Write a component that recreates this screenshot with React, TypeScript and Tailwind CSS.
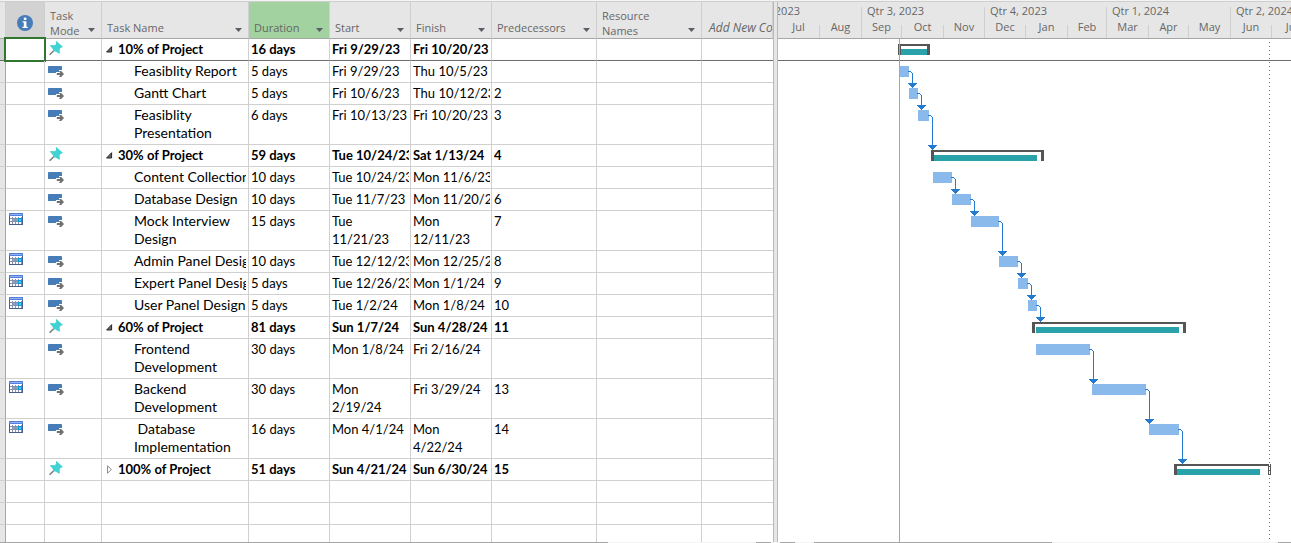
import React from 'react';

type Mode = 'manual' | 'auto';

interface Task {
  name: string;
  mode: Mode;
  duration: string;
  start: string;
  finish: string;
  pred?: string;
  calendar?: boolean;
  summary?: 'open' | 'closed';
  tall?: boolean;
  bar: [number, number];
  progress?: [number, number];
  link?: boolean;
}

const tasks: Task[] = [
  { name: '10% of Project', mode: 'manual', duration: '16 days', start: 'Fri 9/29/23', finish: 'Fri 10/20/23', summary: 'open', bar: [120, 152], progress: [123, 149] },
  { name: 'Feasiblity Report', mode: 'auto', duration: '5 days', start: 'Fri 9/29/23', finish: 'Thu 10/5/23', bar: [122, 131], link: true },
  { name: 'Gantt Chart', mode: 'auto', duration: '5 days', start: 'Fri 10/6/23', finish: 'Thu 10/12/23', pred: '2', bar: [131, 140], link: true },
  { name: 'Feasiblity\nPresentation', mode: 'auto', duration: '6 days', start: 'Fri 10/13/23', finish: 'Fri 10/20/23', pred: '3', tall: true, bar: [140, 151], link: true },
  { name: '30% of Project', mode: 'manual', duration: '59 days', start: 'Tue 10/24/23', finish: 'Sat 1/13/24', pred: '4', summary: 'open', bar: [153, 266], progress: [156, 259] },
  { name: 'Content Collection', mode: 'auto', duration: '10 days', start: 'Tue 10/24/23', finish: 'Mon 11/6/23', bar: [155, 174], link: true },
  { name: 'Database Design', mode: 'auto', duration: '10 days', start: 'Tue 11/7/23', finish: 'Mon 11/20/23', pred: '6', bar: [174, 193], link: true },
  { name: 'Mock Interview\nDesign', mode: 'auto', duration: '15 days', start: 'Tue\n11/21/23', finish: 'Mon\n12/11/23', pred: '7', calendar: true, tall: true, bar: [193, 221], link: true },
  { name: 'Admin Panel Design', mode: 'auto', duration: '10 days', start: 'Tue 12/12/23', finish: 'Mon 12/25/23', pred: '8', calendar: true, bar: [221, 240], link: true },
  { name: 'Expert Panel Design', mode: 'auto', duration: '5 days', start: 'Tue 12/26/23', finish: 'Mon 1/1/24', pred: '9', calendar: true, bar: [240, 250], link: true },
  { name: 'User Panel Design', mode: 'auto', duration: '5 days', start: 'Tue 1/2/24', finish: 'Mon 1/8/24', pred: '10', calendar: true, bar: [250, 259], link: true },
  { name: '60% of Project', mode: 'manual', duration: '81 days', start: 'Sun 1/7/24', finish: 'Sun 4/28/24', pred: '11', summary: 'open', bar: [254, 408], progress: [258, 401] },
  { name: 'Frontend\nDevelopment', mode: 'auto', duration: '30 days', start: 'Mon 1/8/24', finish: 'Fri 2/16/24', tall: true, bar: [258, 312], link: true },
  { name: 'Backend\nDevelopment', mode: 'auto', duration: '30 days', start: 'Mon\n2/19/24', finish: 'Fri 3/29/24', pred: '13', calendar: true, tall: true, bar: [314, 368], link: true },
  { name: '\u00a0Database\nImplementation', mode: 'auto', duration: '16 days', start: 'Mon 4/1/24', finish: 'Mon\n4/22/24', pred: '14', calendar: true, tall: true, bar: [371, 401], link: true },
  { name: '100% of Project', mode: 'manual', duration: '51 days', start: 'Sun 4/21/24', finish: 'Sun 6/30/24', pred: '15', summary: 'closed', bar: [396, 493], progress: [399, 482] },
];

const emptyRows = Array.from({ length: 40 }, (_, i) => i);

const rowTops: number[] = [];
tasks.reduce((y, t) => {
  rowTops.push(y);
  return y + (t.tall ? 40 : 22);
}, 0);

const quarters = [
  { label: 'Qtr 2, 2023', box: 'w-[83px]', text: '-ml-[35px]', months: [['Jul', 'w-[42px]'], ['Aug', 'w-[41px]']] },
  { label: 'Qtr 3, 2023', box: 'w-[123px] border-l', text: 'pl-[5px]', months: [['Sep', 'w-[40px]'], ['Oct', 'w-[42px]'], ['Nov', 'w-[40px]']] },
  { label: 'Qtr 4, 2023', box: 'w-[122px] border-l', text: 'pl-[5px]', months: [['Dec', 'w-[41px]'], ['Jan', 'w-[42px]'], ['Feb', 'w-[38px]']] },
  { label: 'Qtr 1, 2024', box: 'w-[124px] border-l', text: 'pl-[5px]', months: [['Mar', 'w-[42px]'], ['Apr', 'w-[40px]'], ['May', 'w-[41px]']] },
  { label: 'Qtr 2, 2024', box: 'w-[123px] border-l', text: 'pl-[5px]', months: [['Jun', 'w-[41px]'], ['Jul', 'w-[41px]'], ['Aug', 'w-[40px]']] },
];

function InfoIcon() {
  return (
    <svg width="16" height="16" viewBox="0 0 16 16" role="img" aria-label="Indicators">
      <circle cx="8" cy="8" r="8" fill="#467db8" />
      <rect x="6.8" y="2.6" width="2.6" height="2.4" fill="#fff" />
      <path d="M5.6 6.2h3.8v5.6h1.3v1.3H5.4v-1.3h1.4V7.4H5.6z" fill="#fff" />
    </svg>
  );
}

function PinIcon() {
  return (
    <svg className="ml-1 mt-[2px] block" width="14" height="15" viewBox="0 0 14 15" role="img" aria-label="Manually scheduled">
      <path d="M5 9.5L0.6 13.8" stroke="#7a7a7a" strokeWidth="1.5" />
      <path d="M7.4 0L13.8 5.8L13.2 6.6L11.6 6.8L10.6 8.6L10.9 12L10.2 12.8L6.6 10.4L4.2 10.2L3.8 8L1 4.8L1.6 3.9L5.6 4.2L7.2 3L6.8 0.8z" fill="#41d3d3" />
    </svg>
  );
}

function AutoIcon() {
  return (
    <svg className="ml-[3px] mt-[5px] block" width="16" height="12" viewBox="0 0 16 12" role="img" aria-label="Auto scheduled">
      <rect width="14" height="7" rx="0.4" fill="#467db8" />
      <path d="M8 6h3V4h3.2L16 6v5H8z" fill="#fff" />
      <path d="M9 7h3M12.2 4.6L15 7.9L12.2 11.2" fill="none" />
      <path d="M8.8 6.9h3.4L11 4.9h2.2L16 8L13.2 11.1H11l1.2-2H8.8z" fill="#707070" />
    </svg>
  );
}

function CalendarIcon() {
  return (
    <svg className="ml-[3px] mt-[2px] block" width="14" height="12" viewBox="0 0 14 12" shapeRendering="crispEdges" role="img" aria-label="Date constraint">
      <rect width="14" height="12" fill="#4a608c" />
      <rect width="14" height="3" fill="#5380dc" />
      <rect x="1" y="1" width="12" height="1" fill="#8fb0f5" />
      <rect x="1" y="3" width="12" height="8" fill="#fff" />
      <path d="M3 4h1v7H3zM6 4h1v7H6zM9 4h1v7H9zM12 4h1v7h-1zM1 5h12v1H1zM1 8h12v1H1z" fill="#8492b2" />
      <path d="M4 6h2v2H4zM7 6h2v2H7z" fill="#8fa0c4" />
      <rect x="9" y="5" width="4" height="4" fill="#0a9ad8" />
      <rect x="10" y="6" width="2" height="2" fill="#35d3fb" />
    </svg>
  );
}

function Toggle({ open }: { open: boolean }) {
  return (
    <button type="button" aria-label={open ? 'Collapse' : 'Expand'} className="flex h-[20px] w-4 shrink-0 items-center pl-1">
      {open ? (
        <svg width="7" height="7" viewBox="0 0 7 7">
          <path d="M5.6 0.7V6H0.6z" fill="#666" stroke="#262626" />
        </svg>
      ) : (
        <svg width="7" height="9" viewBox="0 0 7 9">
          <path d="M1.5 0.8L5.5 4.5L1.5 8.2z" fill="#fff" stroke="#8c8c8c" />
        </svg>
      )}
    </button>
  );
}

function HeaderCell({ label, two, green, italic, menu = true }: { label: string; two?: boolean; green?: boolean; italic?: boolean; menu?: boolean }) {
  return (
    <th scope="col" className={`border-b border-r border-b-[#a6a6a6] border-r-[#cfcfcf] p-0 font-normal ${green ? 'bg-[#a2d2a0]' : 'bg-[#e6e6e6]'}`}>
      <div className={`flex h-9 items-end justify-between overflow-hidden pl-[5px] ${menu ? 'pr-[6px]' : ''} ${two ? '' : 'pb-[3px]'}`}>
        <span className={`whitespace-pre text-left ${italic ? 'pl-[2px] text-[12px] italic' : ''}`}>{label}</span>
        {menu && (
          <button type="button" aria-label={`${label.replace('\n', ' ')} menu`} className={`flex shrink-0 ${two ? 'pb-[6px]' : 'pb-[3px]'}`}>
            <svg width="7" height="4" viewBox="0 0 7 4"><path d="M0 0h7L3.5 4z" fill="#5c5c66" /></svg>
          </button>
        )}
      </div>
    </th>
  );
}

function Cell({ children, line, bold, className = '' }: { children?: React.ReactNode; line: string; bold?: boolean; className?: string }) {
  return (
    <td className={`border-b border-r border-r-[#d0d0d0] p-0 align-top ${line} ${className}`}>
      <div className={`ml-[2px] mr-px overflow-hidden whitespace-pre pt-px ${bold ? 'font-bold' : ''}`}>{children}</div>
    </td>
  );
}

function TaskTable() {
  return (
    <table className="w-[773px] table-fixed border-separate border-spacing-0 font-['Lato',sans-serif] text-[13px] leading-[18px] text-black">
      <colgroup>
        <col className="w-[6px]" />
        <col className="w-[39px]" />
        <col className="w-[57px]" />
        <col className="w-[147px]" />
        <col className="w-[81px]" />
        <col className="w-[81px]" />
        <col className="w-[81px]" />
        <col className="w-[105px]" />
        <col className="w-[105px]" />
        <col className="w-[71px]" />
      </colgroup>
      <thead className="font-['Open_Sans',sans-serif] text-[11px] leading-[15px] text-[#666]">
        <tr>
          <td className="border-b border-r border-b-[#a6a6a6] border-r-[#cfcfcf] bg-[#e6e6e6] p-0" />
          <th scope="col" className="border-b border-r border-b-[#a6a6a6] border-r-[#cfcfcf] bg-[#d2d2d2] p-0">
            <div className="flex justify-center pt-[5px]"><InfoIcon /></div>
          </th>
          <HeaderCell label={'Task\nMode'} two />
          <HeaderCell label="Task Name" />
          <HeaderCell label="Duration" green />
          <HeaderCell label="Start" />
          <HeaderCell label="Finish" />
          <HeaderCell label="Predecessors" />
          <HeaderCell label={'Resource\nNames'} two />
          <HeaderCell label="Add New Column" italic menu={false} />
        </tr>
      </thead>
      <tbody>
        {tasks.map((t, i) => {
          const line = i === 0 ? 'border-b-[#6e6e6e]' : 'border-b-[#d0d0d0]';
          const bold = !!t.summary;
          return (
            <tr key={i} className={t.tall ? 'h-10' : 'h-[22px]'}>
              <td className={`border-b border-r border-r-[#a6a6a6] p-0 ${line} ${i === 0 ? 'bg-[#d2d2d2]' : 'bg-[#e6e6e6]'}`} />
              <td className={`relative border-b border-r border-r-[#d0d0d0] p-0 align-top ${line}`}>
                {t.calendar && <CalendarIcon />}
                {i === 0 && <div className="absolute -inset-x-[2px] -inset-y-[2px] border-2 border-[#31752f]" />}
              </td>
              <td className={`border-b border-r border-r-[#d0d0d0] p-0 align-top ${line}`}>
                {t.mode === 'manual' ? <PinIcon /> : <AutoIcon />}
              </td>
              <td className={`border-b border-r border-r-[#d0d0d0] p-0 align-top ${line}`}>
                {t.summary ? (
                  <div className="flex h-[21px] overflow-hidden font-bold">
                    <Toggle open={t.summary === 'open'} />
                    <span className="whitespace-pre pt-px">{t.name}</span>
                  </div>
                ) : (
                  <div className="ml-8 mr-[2px] overflow-hidden whitespace-pre pt-px text-[14px] leading-[18px]">{t.name}</div>
                )}
              </td>
              <Cell line={line} bold={bold}>{t.duration}</Cell>
              <Cell line={line} bold={bold}>{t.start}</Cell>
              <Cell line={line} bold={bold}>{t.finish}</Cell>
              <Cell line={line} bold={bold}>{t.pred}</Cell>
              <Cell line={line} />
              <Cell line={line} className="border-r-0" />
            </tr>
          );
        })}
        {emptyRows.map((r) => (
          <tr key={`e${r}`} className="h-[22px]">
            <td className="border-b border-r border-b-[#d0d0d0] border-r-[#a6a6a6] bg-[#e6e6e6] p-0" />
            {[0, 1, 2, 3, 4, 5, 6, 7].map((c) => (
              <td key={c} className="border-b border-r border-[#d0d0d0] p-0" />
            ))}
            <td className="border-b border-[#d0d0d0] p-0" />
          </tr>
        ))}
      </tbody>
    </table>
  );
}

function Timescale() {
  return (
    <div className="flex h-[37px] shrink-0 overflow-hidden border-b border-[#a6a6a6] bg-[#e6e6e6] pt-[5px] font-['Open_Sans',sans-serif] text-[11px] leading-[14px] text-[#666]">
      {quarters.map((q, qi) => (
        <div key={qi} className={`flex shrink-0 flex-col justify-between border-[#cfcfcf] ${q.box}`}>
          <div className={`-mt-[3px] whitespace-nowrap ${q.text}`}>{q.label}</div>
          <div className="flex">
            {q.months.map(([m, w], mi) => (
              <div key={m} className={`flex h-[13px] items-end justify-center border-[#cfcfcf] pb-1 ${w} ${mi < q.months.length - 1 || qi === 0 && mi === 0 ? 'border-r' : ''}`}>
                {m}
              </div>
            ))}
          </div>
        </div>
      ))}
    </div>
  );
}

function GanttBars() {
  return (
    <svg className="block shrink-0" width="2400" height="1200" shapeRendering="crispEdges" role="img" aria-label="Gantt chart">
      <rect x="0" y="21" width="2400" height="1" fill="#6e6e6e" />
      <line x1="491.5" y1="3" x2="491.5" y2="1200" stroke="#6e6e6e" strokeDasharray="1 3" />
      {tasks.map((t, i) => {
        const y = rowTops[i];
        const [a, b] = t.bar;
        if (t.summary && t.progress) {
          const closed = t.summary === 'closed';
          return (
            <g key={i} fill="#555">
              <rect x={a} y={y + 5} width={b - a} height="2" />
              <rect x={a} y={y + 5} width="3" height="11" />
              <rect x={b - 3} y={y + 5} width="3" height="11" />
              {closed && (
                <path d={`M${b - 2} ${y + 5}h1v2h-1zM${b - 2} ${y + 8}h1v3h-1zM${b - 2} ${y + 12}h1v3h-1z`} fill="#fff" />
              )}
              <rect x={t.progress[0]} y={y + 10} width={t.progress[1] - t.progress[0]} height="6" fill="#2aa2aa" />
            </g>
          );
        }
        return <rect key={i} x={a} y={y + 5} width={b - a} height="11" fill="#8abaec" />;
      })}
      {tasks.map((t, i) => {
        if (!t.link) return null;
        const y = rowTops[i] + 10;
        const b = t.bar[1];
        const end = rowTops[i + 1] + 5;
        return (
          <path
            key={i}
            fill="#2479d0"
            d={`M${b - 1} ${y}h3v1h-3zM${b + 2} ${y + 1}h1v1h-1zM${b + 3} ${y + 2}h1V${end}h-1zM${b - 1} ${end - 5}h9v1h-1v1h-1v1h-1v1h-1v1h-1v-1h-1v-1h-1v-1h-1v-1h-1z`}
          />
        );
      })}
      <rect x="121" y="0" width="1" height="1200" fill="#8fb78f" />
    </svg>
  );
}

export default function App() {
  return (
    <div className="flex h-screen flex-col overflow-hidden bg-white">
      <div className="h-[2px] shrink-0 border-b border-[#cfcfcf] bg-[#f3f3f3]" />
      <main className="flex min-h-0 flex-1">
        <section aria-label="Task list" className="shrink-0 overflow-hidden">
          <TaskTable />
        </section>
        <div role="separator" aria-orientation="vertical" className="w-[5px] shrink-0 border-x border-[#b9b9b9] bg-[#e6e6e6]" />
        <section aria-label="Timeline" className="flex min-w-0 flex-1 flex-col overflow-hidden">
          <Timescale />
          <div className="min-h-0 flex-1 overflow-hidden">
            <GanttBars />
          </div>
        </section>
      </main>
      <div className="flex h-px shrink-0 bg-[#f3f3f3]">
        <div className="w-[608px] bg-[#a6a6a6]" />
        <div className="w-[148px]" />
        <div className="w-[15px] bg-[#a6a6a6]" />
        <div className="w-[9px]" />
        <div className="w-[15px] bg-[#a6a6a6]" />
        <div className="w-[19px]" />
        <div className="w-[238px] bg-[#a6a6a6]" />
        <div className="flex-1" />
        <div className="w-[13px] bg-[#a6a6a6]" />
      </div>
    </div>
  );
}
